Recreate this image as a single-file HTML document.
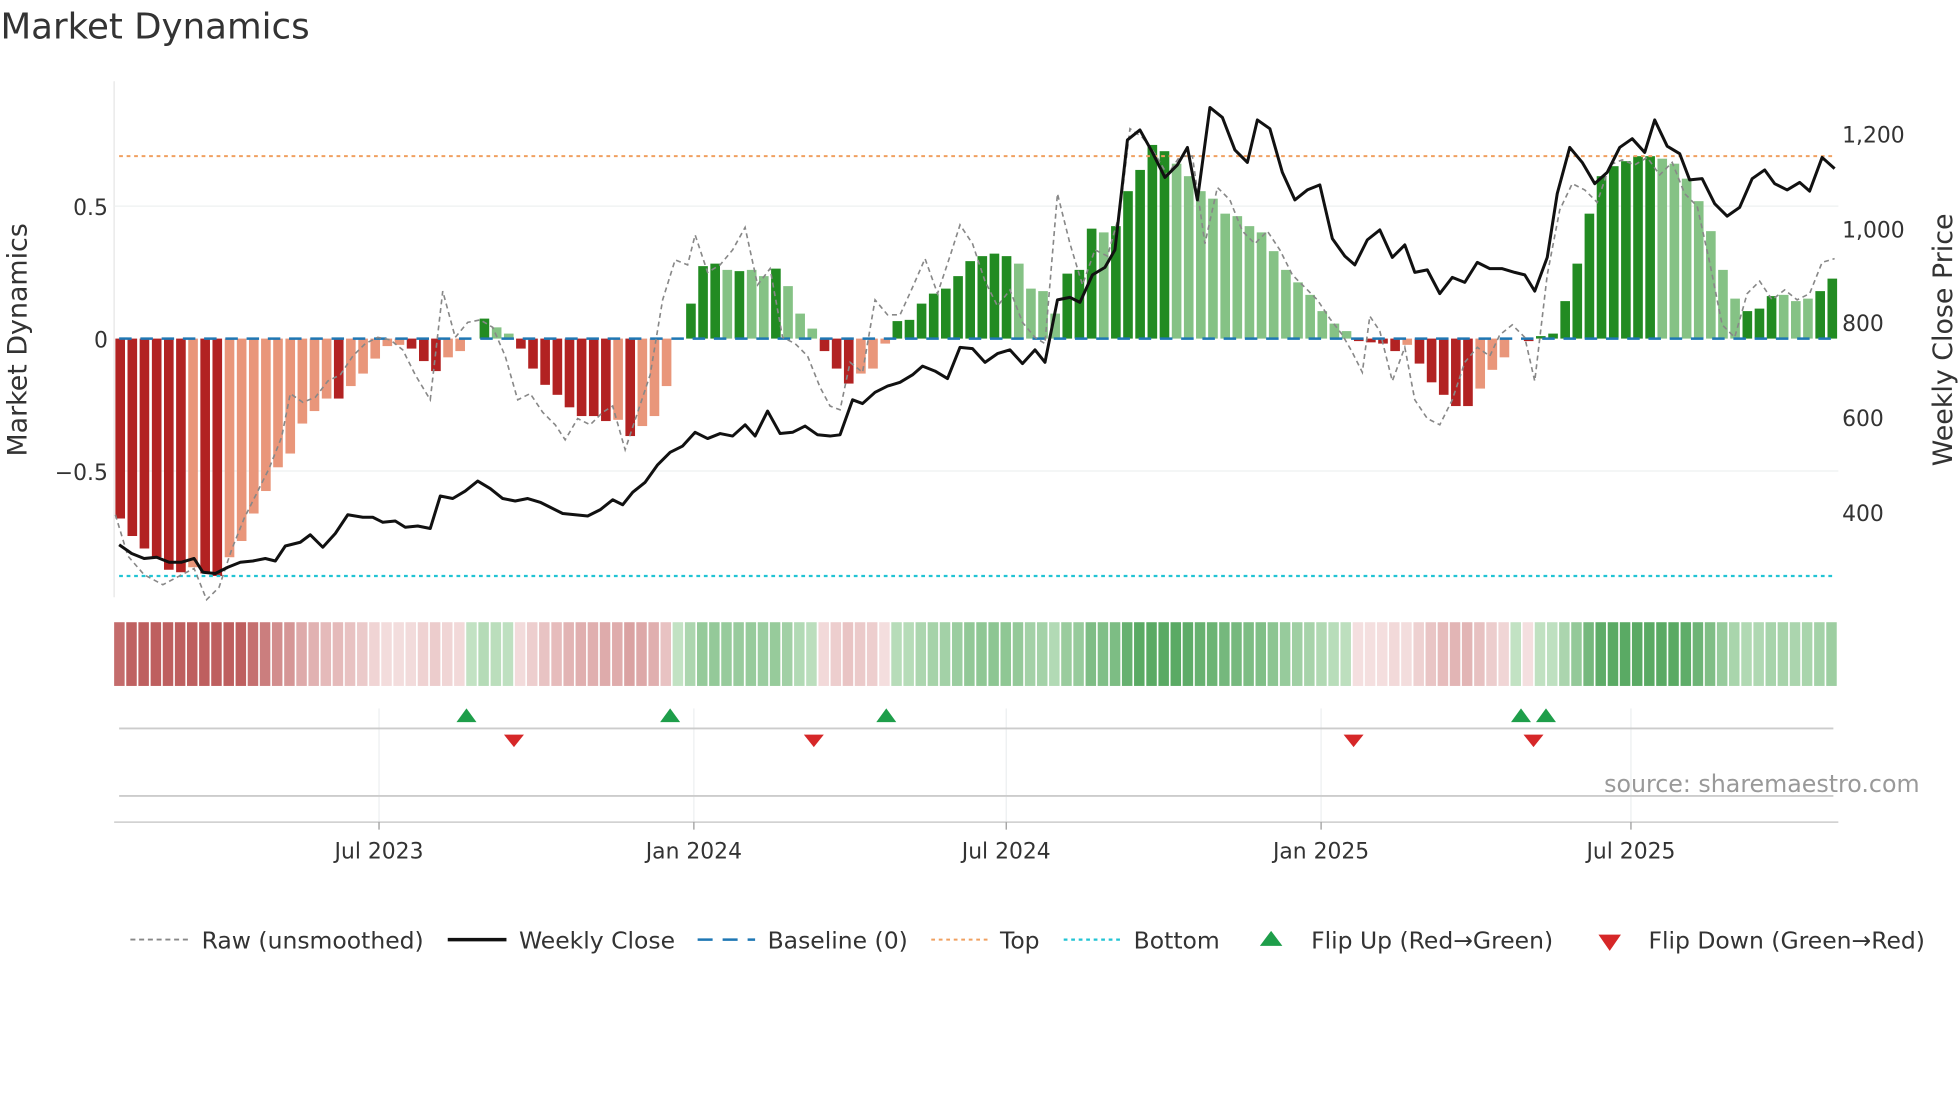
<!DOCTYPE html>
<html><head><meta charset="utf-8"><style>
html,body{margin:0;padding:0;background:#fff;width:1960px;height:1102px;overflow:hidden}
svg{display:block}
text{font-family:"DejaVu Sans","Liberation Sans",sans-serif;fill:#333}
</style></head><body>
<svg id="s" width="1960" height="1102" viewBox="0 0 1568 882" xmlns="http://www.w3.org/2000/svg">
<text x="0" y="31" font-size="28.5">Market Dynamics</text>
<line x1="91" y1="65" x2="91" y2="478" stroke="#e6e6e6"/>
<line x1="91" y1="165" x2="1471" y2="165" stroke="#eef0f0"/>
<line x1="91" y1="377" x2="1471" y2="377" stroke="#eef0f0"/>
<g id="bars"></g>
<g id="strip"></g>
<line x1="95" y1="271" x2="1468" y2="271" stroke="#1f77b4" stroke-width="2" stroke-dasharray="10,7"/>
<line x1="95" y1="125" x2="1468" y2="125" stroke="#f0a060" stroke-width="1.6" stroke-dasharray="3,3"/>
<line x1="95" y1="461" x2="1468" y2="461" stroke="#22c4d4" stroke-width="1.8" stroke-dasharray="3,3"/>
<polyline id="raw" fill="none" stroke="#888" stroke-width="1.3" stroke-dasharray="4,3" points="92,412 102,445 115,460 130,468 145,460 155,455 165,480 175,470 185,440 195,415 205,395 215,375 225,350 232,315 242,322 252,318 262,305 272,300 282,285 292,275 302,270 312,272 322,280 332,300 344,320 354,233 364,270 374,258 384,256 394,262 404,285 414,320 424,315 434,330 444,340 452,352 462,335 472,340 482,330 490,325 500,360 510,330 520,300 530,240 540,208 550,212 556,188 566,218 576,212 586,200 596,182 606,228 616,215 626,270 636,275 646,285 656,310 664,325 672,328 680,290 690,298 700,240 710,252 720,252 730,230 740,207 750,235 760,205 768,180 778,195 788,225 798,245 808,232 818,258 828,270 836,275 846,155 856,195 866,228 876,200 886,205 896,170 904,103 914,110 924,123 934,140 944,125 954,125 964,195 974,150 984,160 994,185 1004,195 1014,185 1024,200 1034,220 1044,230 1054,240 1064,255 1074,268 1082,282 1090,298 1096,253 1104,265 1114,305 1124,278 1132,320 1142,335 1152,340 1162,320 1172,290 1182,278 1192,285 1200,268 1210,260 1220,270 1228,305 1238,220 1248,168 1258,147 1268,152 1278,162 1288,132 1298,128 1308,132 1318,126 1328,140 1338,130 1348,155 1358,165 1368,210 1378,260 1388,270 1398,235 1408,225 1418,240 1428,232 1438,240 1448,235 1458,210 1468,207"/>
<polyline fill="none" stroke="#111" stroke-width="2.4" stroke-linejoin="round" points="95,436 105,443 115,447 125,446 135,450 145,450 155,447 162,458 172,459 182,454 192,450 202,449 212,447 220,449 228,437 240,434 248,428 258,438 268,427 278,412 290,414 298,414 306,418 316,417 324,422 334,421 344,423 352,397 362,399 372,393 382,385 392,391 402,399 412,401 422,399 432,402 440,406 450,411 460,412 470,413 480,408 490,400 498,404 506,394 516,386 526,372 536,362 546,357 556,346 566,351 576,347 586,349 596,340 604,349 614,329 624,347 634,346 644,341 654,348 664,349 672,348 682,320 690,323 700,314 710,309 720,306 730,300 738,293 748,297 758,303 768,278 778,279 788,290 798,283 808,280 818,291 828,280 836,290 846,240 856,238 864,242 874,220 884,214 892,200 902,112 912,104 922,122 932,142 942,132 950,118 958,160 968,86 978,94 988,120 998,130 1006,96 1016,103 1026,138 1036,160 1046,152 1056,148 1066,191 1076,205 1084,212 1094,192 1104,184 1114,206 1124,196 1132,218 1142,216 1152,235 1162,222 1172,226 1182,210 1192,215 1202,215 1212,218 1220,220 1228,233 1238,206 1246,155 1256,118 1266,130 1276,147 1286,138 1296,118 1306,111 1316,122 1324,96 1334,117 1344,123 1352,144 1362,143 1372,163 1382,173 1392,166 1402,143 1412,136 1420,147 1430,152 1440,146 1448,153 1458,126 1468,135"/>
<g font-size="17.5">
<text x="86" y="172" text-anchor="end">0.5</text>
<text x="86" y="278" text-anchor="end">0</text>
<text x="86" y="384" text-anchor="end">−0.5</text>
<text x="1474" y="114">1,200</text>
<text x="1474" y="190">1,000</text>
<text x="1474" y="265">800</text>
<text x="1474" y="341">600</text>
<text x="1474" y="417">400</text>
</g>
<text transform="translate(21,272) rotate(-90)" font-size="21.5" text-anchor="middle">Market Dynamics</text>
<text transform="translate(1562,272) rotate(-90)" font-size="21.5" text-anchor="middle">Weekly Close Price</text>
<g stroke="#eceff0">
<line x1="303" y1="567" x2="303" y2="658"/><line x1="555" y1="567" x2="555" y2="658"/><line x1="805" y1="567" x2="805" y2="658"/><line x1="1057" y1="567" x2="1057" y2="658"/><line x1="1305" y1="567" x2="1305" y2="658"/>
</g>
<line x1="95" y1="583" x2="1467" y2="583" stroke="#ccc" stroke-width="1.5"/>
<line x1="95" y1="637" x2="1467" y2="637" stroke="#ccc" stroke-width="1.5"/>
<line x1="91" y1="658" x2="1471" y2="658" stroke="#ccc" stroke-width="1.2"/>
<g fill="#1e9e4a">
<polygon points="365,578 373,567 381,578"/><polygon points="528,578 536,567 544,578"/><polygon points="701,578 709,567 717,578"/><polygon points="1209,578 1217,567 1225,578"/><polygon points="1229,578 1237,567 1245,578"/>
</g>
<g fill="#d62728">
<polygon points="403,588 411,598 419,588"/><polygon points="643,588 651,598 659,588"/><polygon points="1075,588 1083,598 1091,588"/><polygon points="1219,588 1227,598 1235,588"/>
</g>
<text x="1536" y="634" font-size="19" text-anchor="end" style="fill:#999">source: sharemaestro.com</text>
<g stroke="#999"><line x1="303" y1="658" x2="303" y2="664"/><line x1="555" y1="658" x2="555" y2="664"/><line x1="805" y1="658" x2="805" y2="664"/><line x1="1057" y1="658" x2="1057" y2="664"/><line x1="1305" y1="658" x2="1305" y2="664"/></g>
<g font-size="17.5" text-anchor="middle">
<text x="303" y="687">Jul 2023</text><text x="555" y="687">Jan 2024</text><text x="805" y="687">Jul 2024</text><text x="1057" y="687">Jan 2025</text><text x="1305" y="687">Jul 2025</text>
</g>
<g font-size="18.8">
<line x1="104" y1="752" x2="150" y2="752" stroke="#888" stroke-width="1.5" stroke-dasharray="4,3"/>
<text x="161" y="759">Raw (unsmoothed)</text>
<line x1="358" y1="752" x2="405" y2="752" stroke="#111" stroke-width="2.8"/>
<text x="415" y="759">Weekly Close</text>
<line x1="558" y1="752" x2="604" y2="752" stroke="#1f77b4" stroke-width="2" stroke-dasharray="12,8"/>
<text x="614" y="759">Baseline (0)</text>
<line x1="745" y1="752" x2="790" y2="752" stroke="#f0a060" stroke-width="1.6" stroke-dasharray="3,3"/>
<text x="800" y="759">Top</text>
<line x1="851" y1="752" x2="896" y2="752" stroke="#22c4d4" stroke-width="1.8" stroke-dasharray="3,3"/>
<text x="907" y="759">Bottom</text>
<polygon points="1008,757 1017,745 1026,757" fill="#1e9e4a"/>
<text x="1049" y="759">Flip Up (Red→Green)</text>
<polygon points="1279,748 1288,761 1297,748" fill="#d62728"/>
<text x="1319" y="759">Flip Down (Green→Red)</text>
</g>
</svg>
<script>
var d="-144R -158R -168R -175R -185R -187R -183r -188R -190R -175r -162r -140r -122r -103r -92r -68r -58r -48r -48R -38r -28r -16r -6r -5r -8R -18R -26R -15r -10r 0g 16G 9g 4g -8R -24R -37R -45R -55R -62R -62R -66R -65r -78R -70r -62r -38r 0g 28G 58G 60G 55g 54G 55g 50g 56G 42g 20g 8g -10R -24R -36R -28r -24r -4r 14G 15G 28G 36G 40G 50G 62G 66G 68G 66G 60g 40g 38g 20g 52G 55G 88G 85g 90G 118G 135G 155G 150G 140g 130g 118g 112g 100g 98g 90g 85g 70g 55g 45g 35g 22g 12g 6g -2R -3R -4R -10R -5r -20R -35R -45R -54R -54R -40r -25r -15r 0g -2R 2G 4G 30G 60G 100G 130G 138G 142G 146G 146G 144g 140g 128g 110g 86g 55g 32g 22G 24G 34G 35g 30g 32g 38G 48G".split(" ");
var col={R:"#b22222",r:"#e9967a",G:"#228b22",g:"#85c285"};
var n=d.length,w=(1471-91)/n,b="",s="";
for(var i=0;i<n;i++){var v=parseFloat(d[i]),c=d[i].slice(-1),x=91+i*w+1;
if(v!=0){b+='<rect x="'+x.toFixed(1)+'" y="'+(v>0?271-v:271)+'" width="'+(w-2).toFixed(1)+'" height="'+Math.abs(v)+'" fill="'+col[c]+'"/>';}
var t=Math.min(1,Math.abs(v)/160),f;
if(v<0||(v==0&&c=="R")){f="rgb("+Math.round(245-(245-190)*t)+","+Math.round(225-(225-95)*t)+","+Math.round(225-(225-95)*t)+")";}
else{var t2=Math.min(1,0.1+Math.abs(v)/150);f="rgb("+Math.round(205-(205-90)*t2)+","+Math.round(232-(232-170)*t2)+","+Math.round(205-(205-100)*t2)+")";}
s+='<rect x="'+(91+i*w).toFixed(1)+'" y="498" width="'+(w-1.3).toFixed(1)+'" height="51" fill="'+f+'"/>';}
document.getElementById("bars").innerHTML=b;document.getElementById("strip").innerHTML=s;
</script>
</body></html>
